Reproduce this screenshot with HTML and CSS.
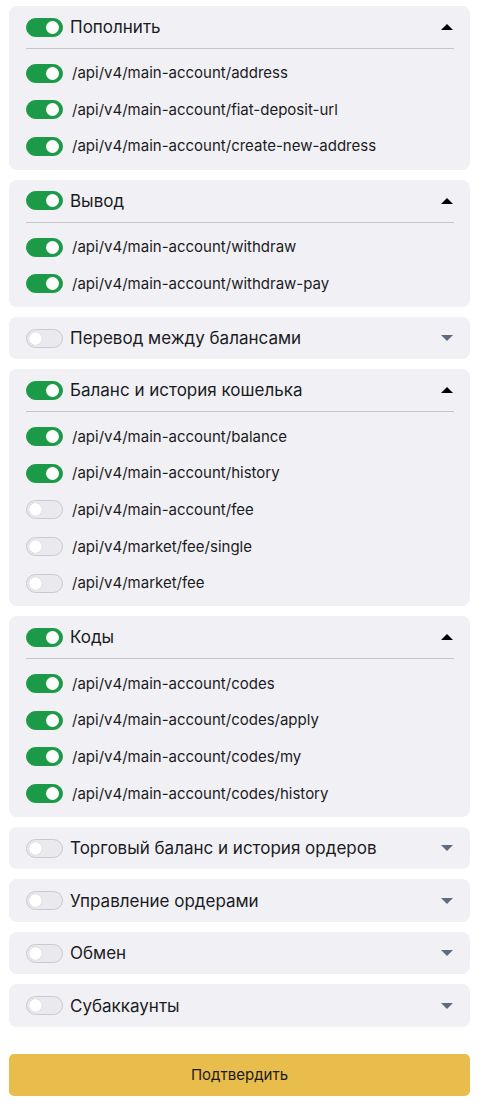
FILE: index.html
```html
<!DOCTYPE html>
<html lang="ru">
<head>
<meta charset="utf-8">
<title>API</title>
<link rel="stylesheet" href="styles.css">
</head>
<body>
<div class="list">
  <section class="card open">
    <div class="head"><span class="tg on"></span><span class="title">Пополнить</span><span class="arr up"></span></div>
    <div class="body">
      <div class="row"><span class="tg on"></span><span class="path">/api/v4/main-account/address</span></div>
      <div class="row"><span class="tg on"></span><span class="path">/api/v4/main-account/fiat-deposit-url</span></div>
      <div class="row"><span class="tg on"></span><span class="path">/api/v4/main-account/create-new-address</span></div>
    </div>
  </section>
  <section class="card open">
    <div class="head"><span class="tg on"></span><span class="title">Вывод</span><span class="arr up"></span></div>
    <div class="body">
      <div class="row"><span class="tg on"></span><span class="path">/api/v4/main-account/withdraw</span></div>
      <div class="row"><span class="tg on"></span><span class="path">/api/v4/main-account/withdraw-pay</span></div>
    </div>
  </section>
  <section class="card">
    <div class="head"><span class="tg"></span><span class="title">Перевод между балансами</span><span class="arr down"></span></div>
  </section>
  <section class="card open">
    <div class="head"><span class="tg on"></span><span class="title">Баланс и история кошелька</span><span class="arr up"></span></div>
    <div class="body">
      <div class="row"><span class="tg on"></span><span class="path">/api/v4/main-account/balance</span></div>
      <div class="row"><span class="tg on"></span><span class="path">/api/v4/main-account/history</span></div>
      <div class="row"><span class="tg"></span><span class="path">/api/v4/main-account/fee</span></div>
      <div class="row"><span class="tg"></span><span class="path">/api/v4/market/fee/single</span></div>
      <div class="row"><span class="tg"></span><span class="path">/api/v4/market/fee</span></div>
    </div>
  </section>
  <section class="card open">
    <div class="head"><span class="tg on"></span><span class="title">Коды</span><span class="arr up"></span></div>
    <div class="body">
      <div class="row"><span class="tg on"></span><span class="path">/api/v4/main-account/codes</span></div>
      <div class="row"><span class="tg on"></span><span class="path">/api/v4/main-account/codes/apply</span></div>
      <div class="row"><span class="tg on"></span><span class="path">/api/v4/main-account/codes/my</span></div>
      <div class="row"><span class="tg on"></span><span class="path">/api/v4/main-account/codes/history</span></div>
    </div>
  </section>
  <section class="card">
    <div class="head"><span class="tg"></span><span class="title">Торговый баланс и история ордеров</span><span class="arr down"></span></div>
  </section>
  <section class="card">
    <div class="head"><span class="tg"></span><span class="title">Управление ордерами</span><span class="arr down"></span></div>
  </section>
  <section class="card">
    <div class="head"><span class="tg"></span><span class="title">Обмен</span><span class="arr down"></span></div>
  </section>
  <section class="card">
    <div class="head"><span class="tg"></span><span class="title">Субаккаунты</span><span class="arr down"></span></div>
  </section>
</div>
<button class="submit" type="button">Подтвердить</button>
</body>
</html>
```
FILE: styles.css
```css
* { box-sizing: border-box; }
body {
  margin: 6px 12px 0 9px;
  font-family: Inter, "Noto Sans", sans-serif;
  color: #1b1b1f;
  background: #fff;
}
.list {
  display: flex;
  flex-direction: column;
  gap: 10px;
}
.card {
  background: #f1f1f5;
  border-radius: 8px;
  padding: 0 16px 0 17px;
}
.head {
  height: 42.5px;
  display: flex;
  align-items: center;
  gap: 7px;
}
.open .head {
  height: 43px;
  border-bottom: 1px solid #c6c6cb;
}
.title {
  flex: 1;
  font-size: 17px;
  line-height: 20px;
}
.body {
  padding: 6px 0 5px;
}
.row {
  height: 36.6px;
  display: flex;
  align-items: center;
  gap: 9px;
}
.path {
  font-size: 15px;
  line-height: 18px;
}
.tg {
  position: relative;
  flex: none;
  width: 37px;
  height: 19px;
  border-radius: 10px;
  background: #e9e9ee;
  border: 1px solid #c9c9ce;
}
.tg::after {
  content: "";
  position: absolute;
  top: 2px;
  left: 2px;
  width: 13px;
  height: 13px;
  border-radius: 50%;
  background: #fff;
  box-shadow: 0 0 1px rgba(0,0,0,0.25);
}
.tg.on {
  background: #1d9a48;
  border-color: #1d9a48;
}
.tg.on::after {
  left: auto;
  right: 3px;
  box-shadow: none;
}
.arr {
  flex: none;
  width: 0;
  height: 0;
  margin-right: 1px;
  border-left: 6px solid transparent;
  border-right: 6px solid transparent;
}
.arr.up {
  border-bottom: 6px solid #000;
}
.arr.down {
  border-top: 6px solid #5e6b80;
}
.submit {
  display: block;
  width: 100%;
  height: 42px;
  margin-top: 27px;
  border: 0;
  border-radius: 5px;
  background: #e8bd4c;
  color: #1b1b1f;
  font-family: Inter, "Noto Sans", sans-serif;
  font-size: 15px;
}
```
